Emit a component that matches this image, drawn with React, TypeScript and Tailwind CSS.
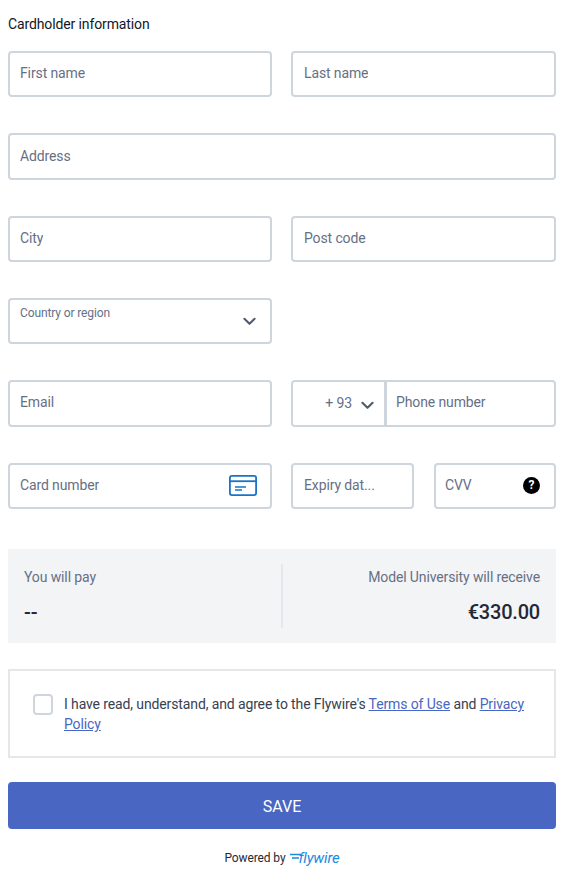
import React from "react";

const fieldBox =
  "h-[46.3px] border-2 border-[#cfd5dd] rounded-[4px] bg-white flex items-center text-[14px] text-[#667085]";
const twoCols = "grid grid-cols-[264px_265px] gap-[19px]";

function Field({ label, className = "", labelClass = "-mt-[2px]", children }: { label: string; className?: string; labelClass?: string; children?: React.ReactNode }) {
  return (
    <div className={`${fieldBox} pl-[10px] pr-[14px] justify-between ${className}`}>
      <span className={`truncate leading-[20px] ${labelClass}`}>{label}</span>
      {children}
    </div>
  );
}

function Chevron({ className = "" }: { className?: string }) {
  return (
    <svg viewBox="0 0 14 9" className={className} fill="none" stroke="#4f5b6d" strokeWidth="2.2" strokeLinecap="round" strokeLinejoin="round">
      <path d="M1.5 1.5 7 7l5.5-5.5" />
    </svg>
  );
}

export default function App() {
  return (
    <div className="w-[564px] h-[892px] bg-white px-[8px] overflow-hidden font-['Roboto',sans-serif] tracking-[-0.12px]">
      <div className="h-[51.2px] pt-[14px] text-[14px] leading-[20px] text-[#111827]">Cardholder information</div>

      <div className="flex flex-col gap-[36px]">
        <div className={twoCols}>
          <Field label="First name" />
          <Field label="Last name" className="!pl-[11px]" />
        </div>
        <Field label="Address" />
        <div className={twoCols}>
          <Field label="City" />
          <Field label="Post code" className="!pl-[11px]" />
        </div>
        <div className={twoCols}>
          <div className={`${fieldBox} relative pl-[10px]`}>
            <span className="absolute left-[10px] top-[4px] text-[12px] leading-[18px]">Country or region</span>
            <Chevron className="absolute right-[14px] top-[17px] w-[13px] h-[9px]" />
          </div>
          <div />
        </div>
        <div className={twoCols}>
          <Field label="Email" labelClass="-mt-[3px]" />
          <div className="flex">
            <div className={`${fieldBox} w-[95px] shrink-0 justify-end pr-[10px] text-[#111827] rounded-r-none`}>
              <span className="mr-[9px]">+ 93</span>
              <Chevron className="w-[13px] h-[9px] mt-[3px]" />
            </div>
            <div className={`${fieldBox} flex-1 pl-[9px] border-l-[1px] rounded-l-none`}>
              <span className="-mt-[3px]">Phone number</span>
            </div>
          </div>
        </div>
        <div className={twoCols}>
          <Field label="Card number">
            <svg viewBox="0 0 28 21" className="w-[28px] h-[21px] shrink-0 -mr-[1px]" fill="none" stroke="#1a73c7" strokeWidth="1.8">
              <rect x="0.9" y="0.9" width="26.2" height="19.2" rx="2" />
              <path d="M1 6.2h26" />
              <path d="M6 12h11M6 15h7" strokeWidth="1.6" />
            </svg>
          </Field>
          <div className="grid grid-cols-[123px_122px] gap-[20px]">
            <Field label="Expiry dat..." className="!pl-[11px]" />
            <Field label="CVV" className="!pl-[9px] !pr-[14px]">
              <span className="w-[17px] h-[17px] rounded-full bg-black text-white text-[12px] font-bold leading-[17px] flex items-center justify-center shrink-0">
                ?
              </span>
            </Field>
          </div>
        </div>
      </div>

      <div className="mt-[40px] h-[94px] bg-[#f3f4f6] flex items-center px-[16px]">
        <div className="flex-1 h-[64px] border-r-2 border-[#e5e7eb] flex flex-col">
          <span className="text-[14px] leading-[20px] text-[#667085] mt-[3px]">You will pay</span>
          <span className="text-[20px] leading-[28px] text-[#1f2937] mt-[11px] font-medium">--</span>
        </div>
        <div className="flex-1 h-[64px] flex flex-col items-end">
          <span className="text-[14px] leading-[20px] text-[#667085] mt-[3px]">Model University will receive</span>
          <span className="text-[20px] leading-[28px] text-[#1f2937] mt-[11px] font-medium tracking-[-0.2px]">€330.00</span>
        </div>
      </div>

      <div className="mt-[26px] h-[89px] border-2 border-[#e5e7eb] flex pl-[23px] pr-[28px] pt-[23px]">
        <div className="w-[20px] h-[21px] shrink-0 border-2 border-[#cfd5dd] rounded-[4px] bg-white" />
        <p className="ml-[11px] text-[14px] leading-[20px] text-[#374151]">
          I have read, understand, and agree to the Flywire's <a className="text-[#4866c2] underline">Terms of Use</a> and{" "}
          <a className="text-[#4866c2] underline">Privacy Policy</a>
        </p>
      </div>

      <div className="mt-[24px] h-[47px] pt-[3px] rounded-[4px] bg-[#4866c2] flex items-center justify-center text-white text-[16px] tracking-normal">
        SAVE
      </div>

      <div className="mt-[21px] flex items-center justify-center text-[12px] leading-[16px] text-[#1f2937]">
        <span>Powered by</span>
        <span className="ml-[5px] relative flex items-center">
          <svg viewBox="0 0 11 10" className="w-[11px] h-[10px] mr-[-3px]" fill="none" stroke="#1b8ae0" strokeWidth="1.5">
            <path d="M0 1.5h11M2 5h7" />
          </svg>
          <span className="text-[15px] leading-[16px] italic text-[#1b8ae0] tracking-[-0.2px]">flywire</span>
        </span>
      </div>
    </div>
  );
}
